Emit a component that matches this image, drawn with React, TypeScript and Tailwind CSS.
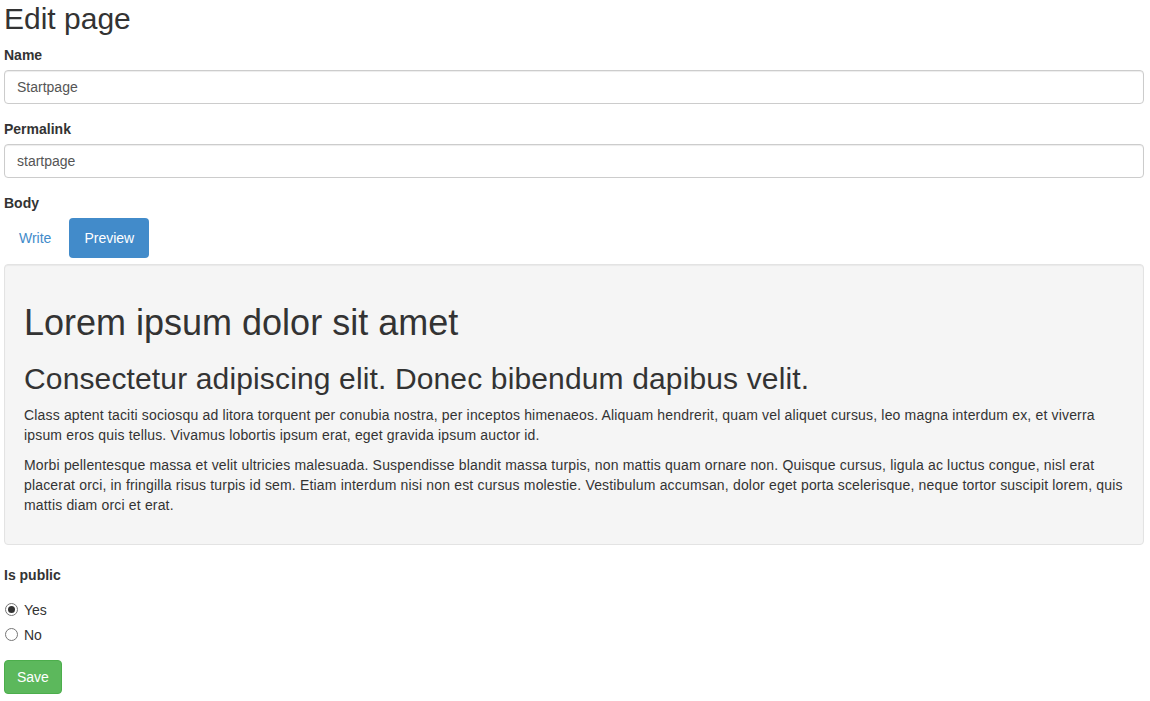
import { useState } from 'react';

const font = "font-['Liberation_Sans',Arial,Helvetica,sans-serif]";

function Field({ label, value }: { label: string; value: string }) {
  return (
    <div className="mb-[15px]">
      <label className="mb-[5px] inline-block text-[14px] font-bold leading-[20px]">{label}</label>
      <input
        defaultValue={value}
        className="block h-[34px] w-full rounded-[4px] border border-[#ccc] bg-white px-[12px] py-[6px] text-[14px] leading-[20px] text-[#555] shadow-[inset_0_1px_1px_rgba(0,0,0,0.075)] outline-none"
      />
    </div>
  );
}

function Radio({ checked, label, onChange }: { checked: boolean; label: string; onChange: () => void }) {
  return (
    <label className="flex h-[20px] cursor-pointer items-center text-[14px] leading-[20px]" onClick={onChange}>
      <span className="ml-[1px] mr-[6px] flex h-[13px] w-[13px] items-center justify-center rounded-full border border-[#767676] bg-white">
        {checked && <span className="h-[7px] w-[7px] rounded-full bg-[#333]" />}
      </span>
      {label}
    </label>
  );
}

export default function App() {
  const [tab, setTab] = useState<'write' | 'preview'>('preview');
  const [isPublic, setIsPublic] = useState(true);

  return (
    <div className={`${font} min-h-screen bg-white px-[4px] text-[14px] leading-[20px] text-[#333]`}>
      <div className="w-[1140px]">
        <h2 className="pt-[2px] text-[30px] font-normal leading-[33px]">Edit page</h2>
        <div className="mt-[10px]">
          <Field label="Name" value="Startpage" />
          <Field label="Permalink" value="startpage" />

          <label className="mb-[5px] inline-block font-bold">Body</label>
          <ul className="flex">
            <li>
              <button
                onClick={() => setTab('write')}
                className={`rounded-[4px] px-[15px] py-[10px] leading-[20px] ${tab === 'write' ? 'bg-[#428bca] text-white' : 'text-[#428bca]'}`}
              >
                Write
              </button>
            </li>
            <li className="ml-[3px]">
              <button
                onClick={() => setTab('preview')}
                className={`rounded-[4px] px-[15px] py-[10px] leading-[20px] ${tab === 'preview' ? 'bg-[#428bca] text-white' : 'text-[#428bca]'}`}
              >
                Preview
              </button>
            </li>
          </ul>

          <div className="mt-[6px] rounded-[4px] border border-[#e3e3e3] bg-[#f5f5f5] px-[19px] pt-[19px] pb-[19px] shadow-[inset_0_1px_1px_rgba(0,0,0,0.05)]">
            {tab === 'preview' ? (
              <>
                <h1 className="mt-[19px] text-[36px] leading-[39.6px]">Lorem ipsum dolor sit amet</h1>
                <h2 className="mt-[19px] mb-[10px] text-[30px] leading-[33px] tracking-[0.14px]">
                  Consectetur adipiscing elit. Donec bibendum dapibus velit.
                </h2>
                <p className="mb-[10px] tracking-[0.17px]">
                  Class aptent taciti sociosqu ad litora torquent per conubia nostra, per inceptos himenaeos. Aliquam
                  hendrerit, quam vel aliquet cursus, leo magna interdum ex, et viverra ipsum eros quis tellus. Vivamus
                  lobortis ipsum erat, eget gravida ipsum auctor id.
                </p>
                <p className="mb-[10px] tracking-[0.17px]">
                  Morbi pellentesque massa et velit ultricies malesuada. Suspendisse blandit massa turpis, non mattis
                  quam ornare non. Quisque cursus, ligula ac luctus congue, nisl erat placerat orci, in fringilla risus
                  turpis id sem. Etiam interdum nisi non est cursus molestie. Vestibulum accumsan, dolor eget porta
                  scelerisque, neque tortor suscipit lorem, quis mattis diam orci et erat.
                </p>
              </>
            ) : (
              <textarea className="h-[240px] w-full resize-none bg-white" />
            )}
          </div>

          <div className="mt-[20px]">
            <label className="mb-[5px] inline-block font-bold">Is public</label>
            <div className="mt-[10px]">
              <Radio checked={isPublic} label="Yes" onChange={() => setIsPublic(true)} />
            </div>
            <div className="mt-[5px]">
              <Radio checked={!isPublic} label="No" onChange={() => setIsPublic(false)} />
            </div>
          </div>

          <button className="mt-[15px] rounded-[4px] border border-[#4cae4c] bg-[#5cb85c] px-[12px] py-[6px] leading-[20px] text-white">
            Save
          </button>
        </div>
      </div>
    </div>
  );
}
